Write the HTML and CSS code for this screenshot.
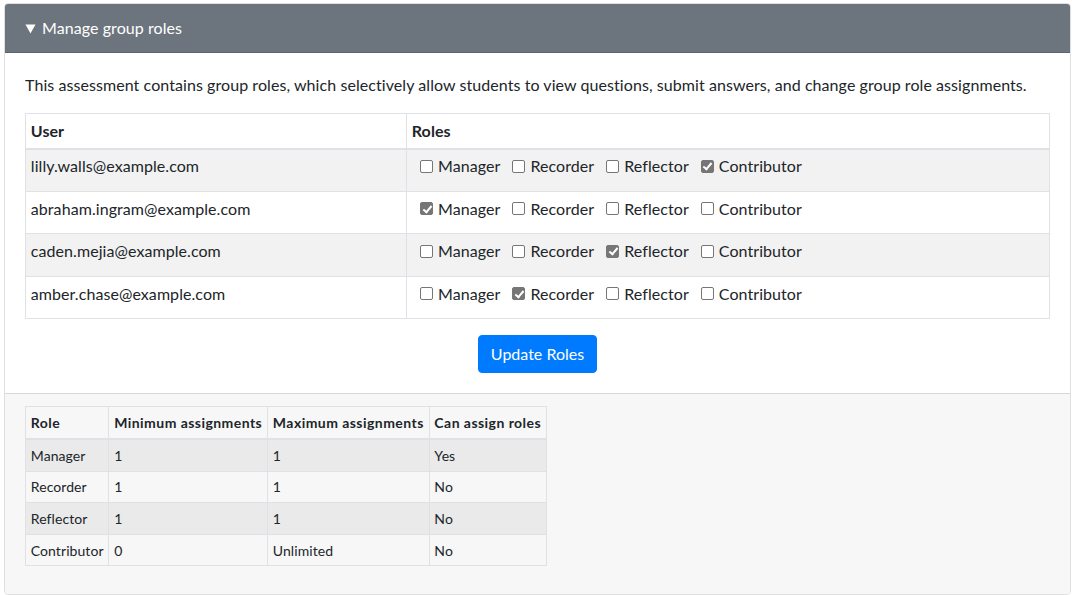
FILE: index.html
```html
<!DOCTYPE html>
<html lang="en">
<head>
<meta charset="utf-8">
<title>Manage group roles</title>
<link rel="stylesheet" href="styles.css">
</head>
<body>
<div class="card">
  <div class="card-header"><svg class="caret" width="11" height="10" viewBox="0 0 11 10"><polygon points="0.5,0.5 10.5,0.5 5.5,9.5" fill="#fff"/></svg>Manage group roles</div>
  <div class="card-body">
    <p class="intro">This assessment contains group roles, which selectively allow students to view questions, submit answers, and change group role assignments.</p>
    <table class="table users">
      <colgroup><col class="col-user"><col></colgroup>
      <thead>
        <tr><th>User</th><th>Roles</th></tr>
      </thead>
      <tbody>
        <tr>
          <td>lilly.walls@example.com</td>
          <td class="roles"><div class="role-list">
            <label class="check"><input type="checkbox" disabled>Manager</label>
            <label class="check"><input type="checkbox" disabled>Recorder</label>
            <label class="check"><input type="checkbox" disabled>Reflector</label>
            <label class="check"><input type="checkbox" checked disabled>Contributor</label>
          </div></td>
        </tr>
        <tr>
          <td>abraham.ingram@example.com</td>
          <td class="roles"><div class="role-list">
            <label class="check"><input type="checkbox" checked disabled>Manager</label>
            <label class="check"><input type="checkbox" disabled>Recorder</label>
            <label class="check"><input type="checkbox" disabled>Reflector</label>
            <label class="check"><input type="checkbox" disabled>Contributor</label>
          </div></td>
        </tr>
        <tr>
          <td>caden.mejia@example.com</td>
          <td class="roles"><div class="role-list">
            <label class="check"><input type="checkbox" disabled>Manager</label>
            <label class="check"><input type="checkbox" disabled>Recorder</label>
            <label class="check"><input type="checkbox" checked disabled>Reflector</label>
            <label class="check"><input type="checkbox" disabled>Contributor</label>
          </div></td>
        </tr>
        <tr>
          <td>amber.chase@example.com</td>
          <td class="roles"><div class="role-list">
            <label class="check"><input type="checkbox" disabled>Manager</label>
            <label class="check"><input type="checkbox" checked disabled>Recorder</label>
            <label class="check"><input type="checkbox" disabled>Reflector</label>
            <label class="check"><input type="checkbox" disabled>Contributor</label>
          </div></td>
        </tr>
      </tbody>
    </table>
    <div class="actions"><button class="btn">Update Roles</button></div>
  </div>
  <div class="card-footer">
    <table class="table small">
      <thead>
        <tr><th>Role</th><th>Minimum assignments</th><th>Maximum assignments</th><th>Can assign roles</th></tr>
      </thead>
      <tbody>
        <tr><td>Manager</td><td>1</td><td>1</td><td>Yes</td></tr>
        <tr><td>Recorder</td><td>1</td><td>1</td><td>No</td></tr>
        <tr><td>Reflector</td><td>1</td><td>1</td><td>No</td></tr>
        <tr><td>Contributor</td><td>0</td><td>Unlimited</td><td>No</td></tr>
      </tbody>
    </table>
  </div>
</div>
</body>
</html>
```
FILE: styles.css
```css
* { box-sizing: border-box; }
html, body { margin: 0; background: #fff; }
body {
  padding: 3px 1px 0 4px;
  font-family: Lato, "Liberation Sans", sans-serif;
  font-size: 16px;
  line-height: 24px;
  letter-spacing: 0.07px;
  color: #212529;
}
.card {
  border: 1px solid rgba(0,0,0,.125);
  border-radius: 4px;
  overflow: hidden;
}
.card-header {
  background: #6c757d;
  color: #fff;
  padding: 12px 20px;
  border-bottom: 1px solid rgba(0,0,0,.125);
  height: 49px;
  display: flex;
  align-items: center;
}
.caret { margin-right: 6px; margin-top: 1px; }
.card-body { padding: 20px; }
.intro { margin: 0 0 16px; }
.table {
  width: 100%;
  border-collapse: collapse;
  margin-bottom: 16px;
}
.table th, .table td {
  border: 1px solid #dee2e6;
  padding: 4.8px;
  text-align: left;
  vertical-align: top;
}
.table thead th {
  border-bottom: 2px solid #dee2e6;
  font-weight: 700;
}
.users .col-user { width: 381px; }
.users tbody tr:nth-child(odd) { background: #f2f2f2; }
.users td { padding-bottom: 12.65px; }
.users td.roles { padding-left: 13px; }
.role-list { display: flex; }
.check {
  display: inline-flex;
  align-items: center;
  margin-right: 12px;
}
.check input {
  appearance: none;
  -webkit-appearance: none;
  width: 13px;
  height: 13px;
  margin: 0 5px 0 0;
  border: 1px solid #767676;
  border-radius: 2px;
  background: #fff;
  position: relative;
}
.check input:checked {
  background: #767676;
  border-color: #767676;
}
.check input:checked::after {
  content: "";
  position: absolute;
  left: 3.5px;
  top: 0.5px;
  width: 3px;
  height: 7px;
  border: solid #fff;
  border-width: 0 2px 2px 0;
  transform: rotate(40deg);
}
.actions { text-align: center; }
.btn {
  font: inherit;
  color: #fff;
  background: #007bff;
  border: 1px solid #007bff;
  border-radius: 4px;
  padding: 6px 12px;
  line-height: 24px;
}
.card-footer {
  background: #f7f7f7;
  border-top: 1px solid rgba(0,0,0,.125);
  padding: 12px 20px;
}
.table.small {
  width: auto;
  font-size: 14px;
  line-height: 21px;
}
.small thead th { letter-spacing: 0.45px; }
.small tbody tr:nth-child(odd) { background: rgba(0,0,0,.05); }
```
